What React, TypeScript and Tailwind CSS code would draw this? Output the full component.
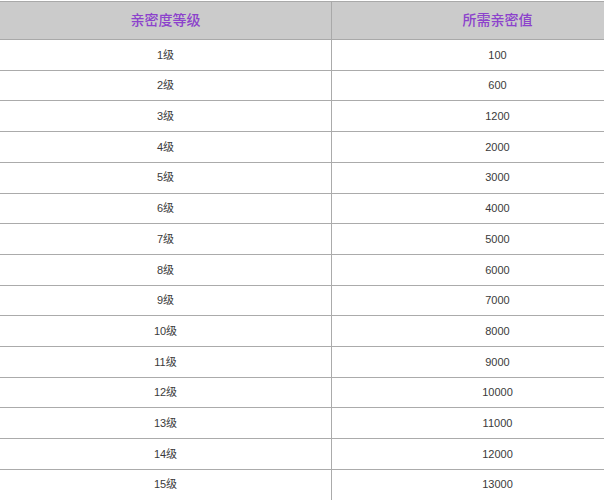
const rows = [
  ["1级", "100"],
  ["2级", "600"],
  ["3级", "1200"],
  ["4级", "2000"],
  ["5级", "3000"],
  ["6级", "4000"],
  ["7级", "5000"],
  ["8级", "6000"],
  ["9级", "7000"],
  ["10级", "8000"],
  ["11级", "9000"],
  ["12级", "10000"],
  ["13级", "11000"],
  ["14级", "12000"],
  ["15级", "13000"],
];

const App = () => {
  return (
    <div
      className="w-[604px] h-[500px] overflow-hidden bg-white pt-px"
      style={{ fontFamily: '"Liberation Sans", "Noto Sans CJK SC", sans-serif' }}
    >
      <div className="w-[663px]">
        {/* Header */}
        <div className="flex h-[39px] bg-[#cbcbcb] border-t border-b border-[#a9a9a9]">
          <div className="w-[332px] flex items-center justify-center border-r border-[#a9a9a9] text-[14px] font-medium text-[#8c42cc]">
            亲密度等级
          </div>
          <div className="flex-1 flex items-center justify-center text-[14px] font-medium text-[#8c42cc]">
            所需亲密值
          </div>
        </div>

        {/* Rows */}
        {rows.map(([level, value]) => (
          <div key={level} className="flex h-[30.714px] border-b border-[#ababab] text-[11px] text-[#3a3a3a]">
            <div className="w-[332px] flex items-center justify-center border-r border-[#ababab]">{level}</div>
            <div className="flex-1 flex items-center justify-center">{value}</div>
          </div>
        ))}
      </div>
    </div>
  );
};

export default App;
